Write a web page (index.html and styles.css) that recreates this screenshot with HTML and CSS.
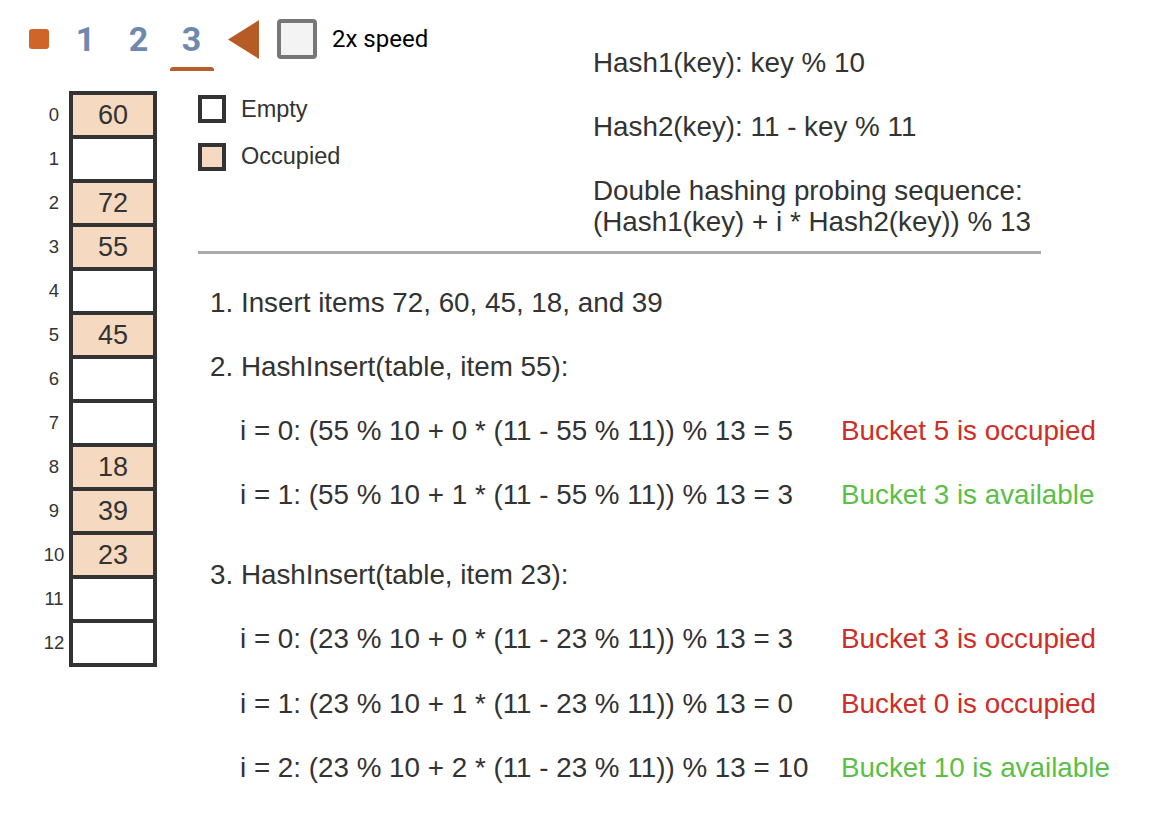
FILE: index.html
```html
<!DOCTYPE html>
<html lang="en">
<head>
<meta charset="utf-8">
<title>Double hashing</title>
<link rel="stylesheet" href="styles.css">
</head>
<body>
<div class="page">
  <div class="controls">
    <span class="stop"></span>
    <span class="step-btn">1</span>
    <span class="step-btn">2</span>
    <span class="step-btn current">3</span>
    <svg class="back" width="31" height="39" viewBox="0 0 31 39"><polygon points="0,19.5 31,0 31,39" fill="#b65b26"/></svg>
    <span class="checkbox"></span>
    <span class="speed">2x speed</span>
  </div>

  <div class="table-wrap">
    <div class="labels">
      <span>0</span><span>1</span><span>2</span><span>3</span><span>4</span><span>5</span><span>6</span><span>7</span><span>8</span><span>9</span><span>10</span><span>11</span><span>12</span>
    </div>
    <div class="table">
      <div class="cell occ">60</div>
      <div class="cell"></div>
      <div class="cell occ">72</div>
      <div class="cell occ">55</div>
      <div class="cell"></div>
      <div class="cell occ">45</div>
      <div class="cell"></div>
      <div class="cell"></div>
      <div class="cell occ">18</div>
      <div class="cell occ">39</div>
      <div class="cell occ">23</div>
      <div class="cell"></div>
      <div class="cell"></div>
    </div>
  </div>

  <div class="legend">
    <div class="legend-row"><span class="swatch"></span><span>Empty</span></div>
    <div class="legend-row"><span class="swatch occ"></span><span>Occupied</span></div>
  </div>

  <div class="hash">
    <p>Hash1(key): key % 10</p>
    <p>Hash2(key): 11 - key % 11</p>
    <p>Double hashing probing sequence:<br>(Hash1(key) + i * Hash2(key)) % 13</p>
  </div>

  <div class="divider"></div>

  <div class="steps">
    <div class="line">1. Insert items 72, 60, 45, 18, and 39</div>
    <div class="line">2. HashInsert(table, item 55):</div>
    <div class="line probe"><span class="formula">i = 0: (55 % 10 + 0 * (11 - 55 % 11)) % 13 = 5</span><span class="bad">Bucket 5 is occupied</span></div>
    <div class="line probe"><span class="formula">i = 1: (55 % 10 + 1 * (11 - 55 % 11)) % 13 = 3</span><span class="good">Bucket 3 is available</span></div>
    <div class="line gap">3. HashInsert(table, item 23):</div>
    <div class="line probe"><span class="formula">i = 0: (23 % 10 + 0 * (11 - 23 % 11)) % 13 = 3</span><span class="bad">Bucket 3 is occupied</span></div>
    <div class="line probe"><span class="formula">i = 1: (23 % 10 + 1 * (11 - 23 % 11)) % 13 = 0</span><span class="bad">Bucket 0 is occupied</span></div>
    <div class="line probe"><span class="formula">i = 2: (23 % 10 + 2 * (11 - 23 % 11)) % 13 = 10</span><span class="good">Bucket 10 is available</span></div>
  </div>
</div>
</body>
</html>
```

FILE: styles.css
```css
html, body {
  margin: 0;
  padding: 0;
  background: #ffffff;
}

.page {
  display: grid;
  grid-template-columns: 198px 395px 1fr;
  grid-template-rows: 91px auto auto auto;
  width: 1150px;
  font-family: "Liberation Sans", Arial, sans-serif;
  color: #333333;
}

/* top controls */
.controls {
  grid-area: 1 / 1 / 2 / 4;
  display: flex;
  align-items: center;
  height: 40px;
  margin-top: 19px;
  padding-left: 29px;
  font-family: Roboto, "Liberation Sans", sans-serif;
}

.stop {
  width: 20px;
  height: 20px;
  border-radius: 3px;
  background: #cf6529;
  margin-right: 14.5px;
}

.step-btn {
  position: relative;
  width: 44px;
  height: 40px;
  line-height: 40px;
  text-align: center;
  font-size: 34px;
  font-weight: 700;
  color: #6f89ae;
  margin-right: 9px;
}

.step-btn.current {
  margin-right: 14.5px;
}

.step-btn.current::after {
  content: "";
  position: absolute;
  left: 0;
  right: 0;
  bottom: -12px;
  height: 4px;
  background: #b85d29;
  border-radius: 3px 3px 0 0;
}

.back {
  display: block;
  margin-right: 18px;
}

.checkbox {
  box-sizing: border-box;
  width: 40px;
  height: 40px;
  border: 4px solid #777777;
  border-radius: 4px;
  background: #f3f3f3;
  margin-right: 15px;
}

.speed {
  font-size: 24px;
  color: #000000;
}

/* hash table */
.table-wrap {
  grid-area: 2 / 1 / 5 / 2;
  align-self: start;
  display: flex;
  gap: 3px;
}

.labels {
  display: flex;
  flex-direction: column;
  gap: 4px;
  width: 24px;
  padding-top: 4px;
  padding-left: 42px;
}

.labels span {
  height: 40px;
  line-height: 40px;
  text-align: center;
  font-size: 18.5px;
  color: #333333;
}

.table {
  display: flex;
  flex-direction: column;
  gap: 4px;
  padding: 4px;
  background: #333333;
}

.cell {
  width: 80px;
  height: 40px;
  line-height: 40px;
  text-align: center;
  font-size: 27px;
  background: #ffffff;
  color: #333333;
}

.cell.occ {
  background: #f5d9c1;
}

/* legend */
.legend {
  grid-area: 2 / 2 / 3 / 3;
  display: flex;
  flex-direction: column;
  gap: 19.5px;
  padding-top: 4px;
}

.legend-row {
  display: flex;
  align-items: center;
  gap: 15px;
  font-size: 23.5px;
  height: 28px;
}

.swatch {
  box-sizing: border-box;
  width: 28px;
  height: 28px;
  border: 4px solid #333333;
  background: #ffffff;
}

.swatch.occ {
  background: #f5d9c1;
}

/* hash functions */
.hash {
  grid-area: 1 / 3 / 3 / 4;
  margin-top: 47px;
  display: flex;
  flex-direction: column;
  gap: 33px;
  font-size: 27.8px;
  line-height: 31px;
}

.hash p {
  margin: 0;
}

.divider {
  grid-area: 3 / 2 / 4 / 4;
  width: 843px;
  height: 3px;
  margin-top: 14px;
  background: #aaaaaa;
}

/* steps */
.steps {
  grid-area: 4 / 2 / 5 / 4;
  display: flex;
  flex-direction: column;
  gap: 32.1px;
  padding: 33px 0 0 12px;
  font-size: 27.8px;
  line-height: 32px;
}

.line {
  white-space: nowrap;
}

.line.gap {
  margin-top: 16px;
}

.probe {
  display: flex;
  padding-left: 30px;
}

.formula {
  width: 601px;
  flex: none;
}

.bad {
  color: #cf2d27;
}

.good {
  color: #5bbf47;
}
```
